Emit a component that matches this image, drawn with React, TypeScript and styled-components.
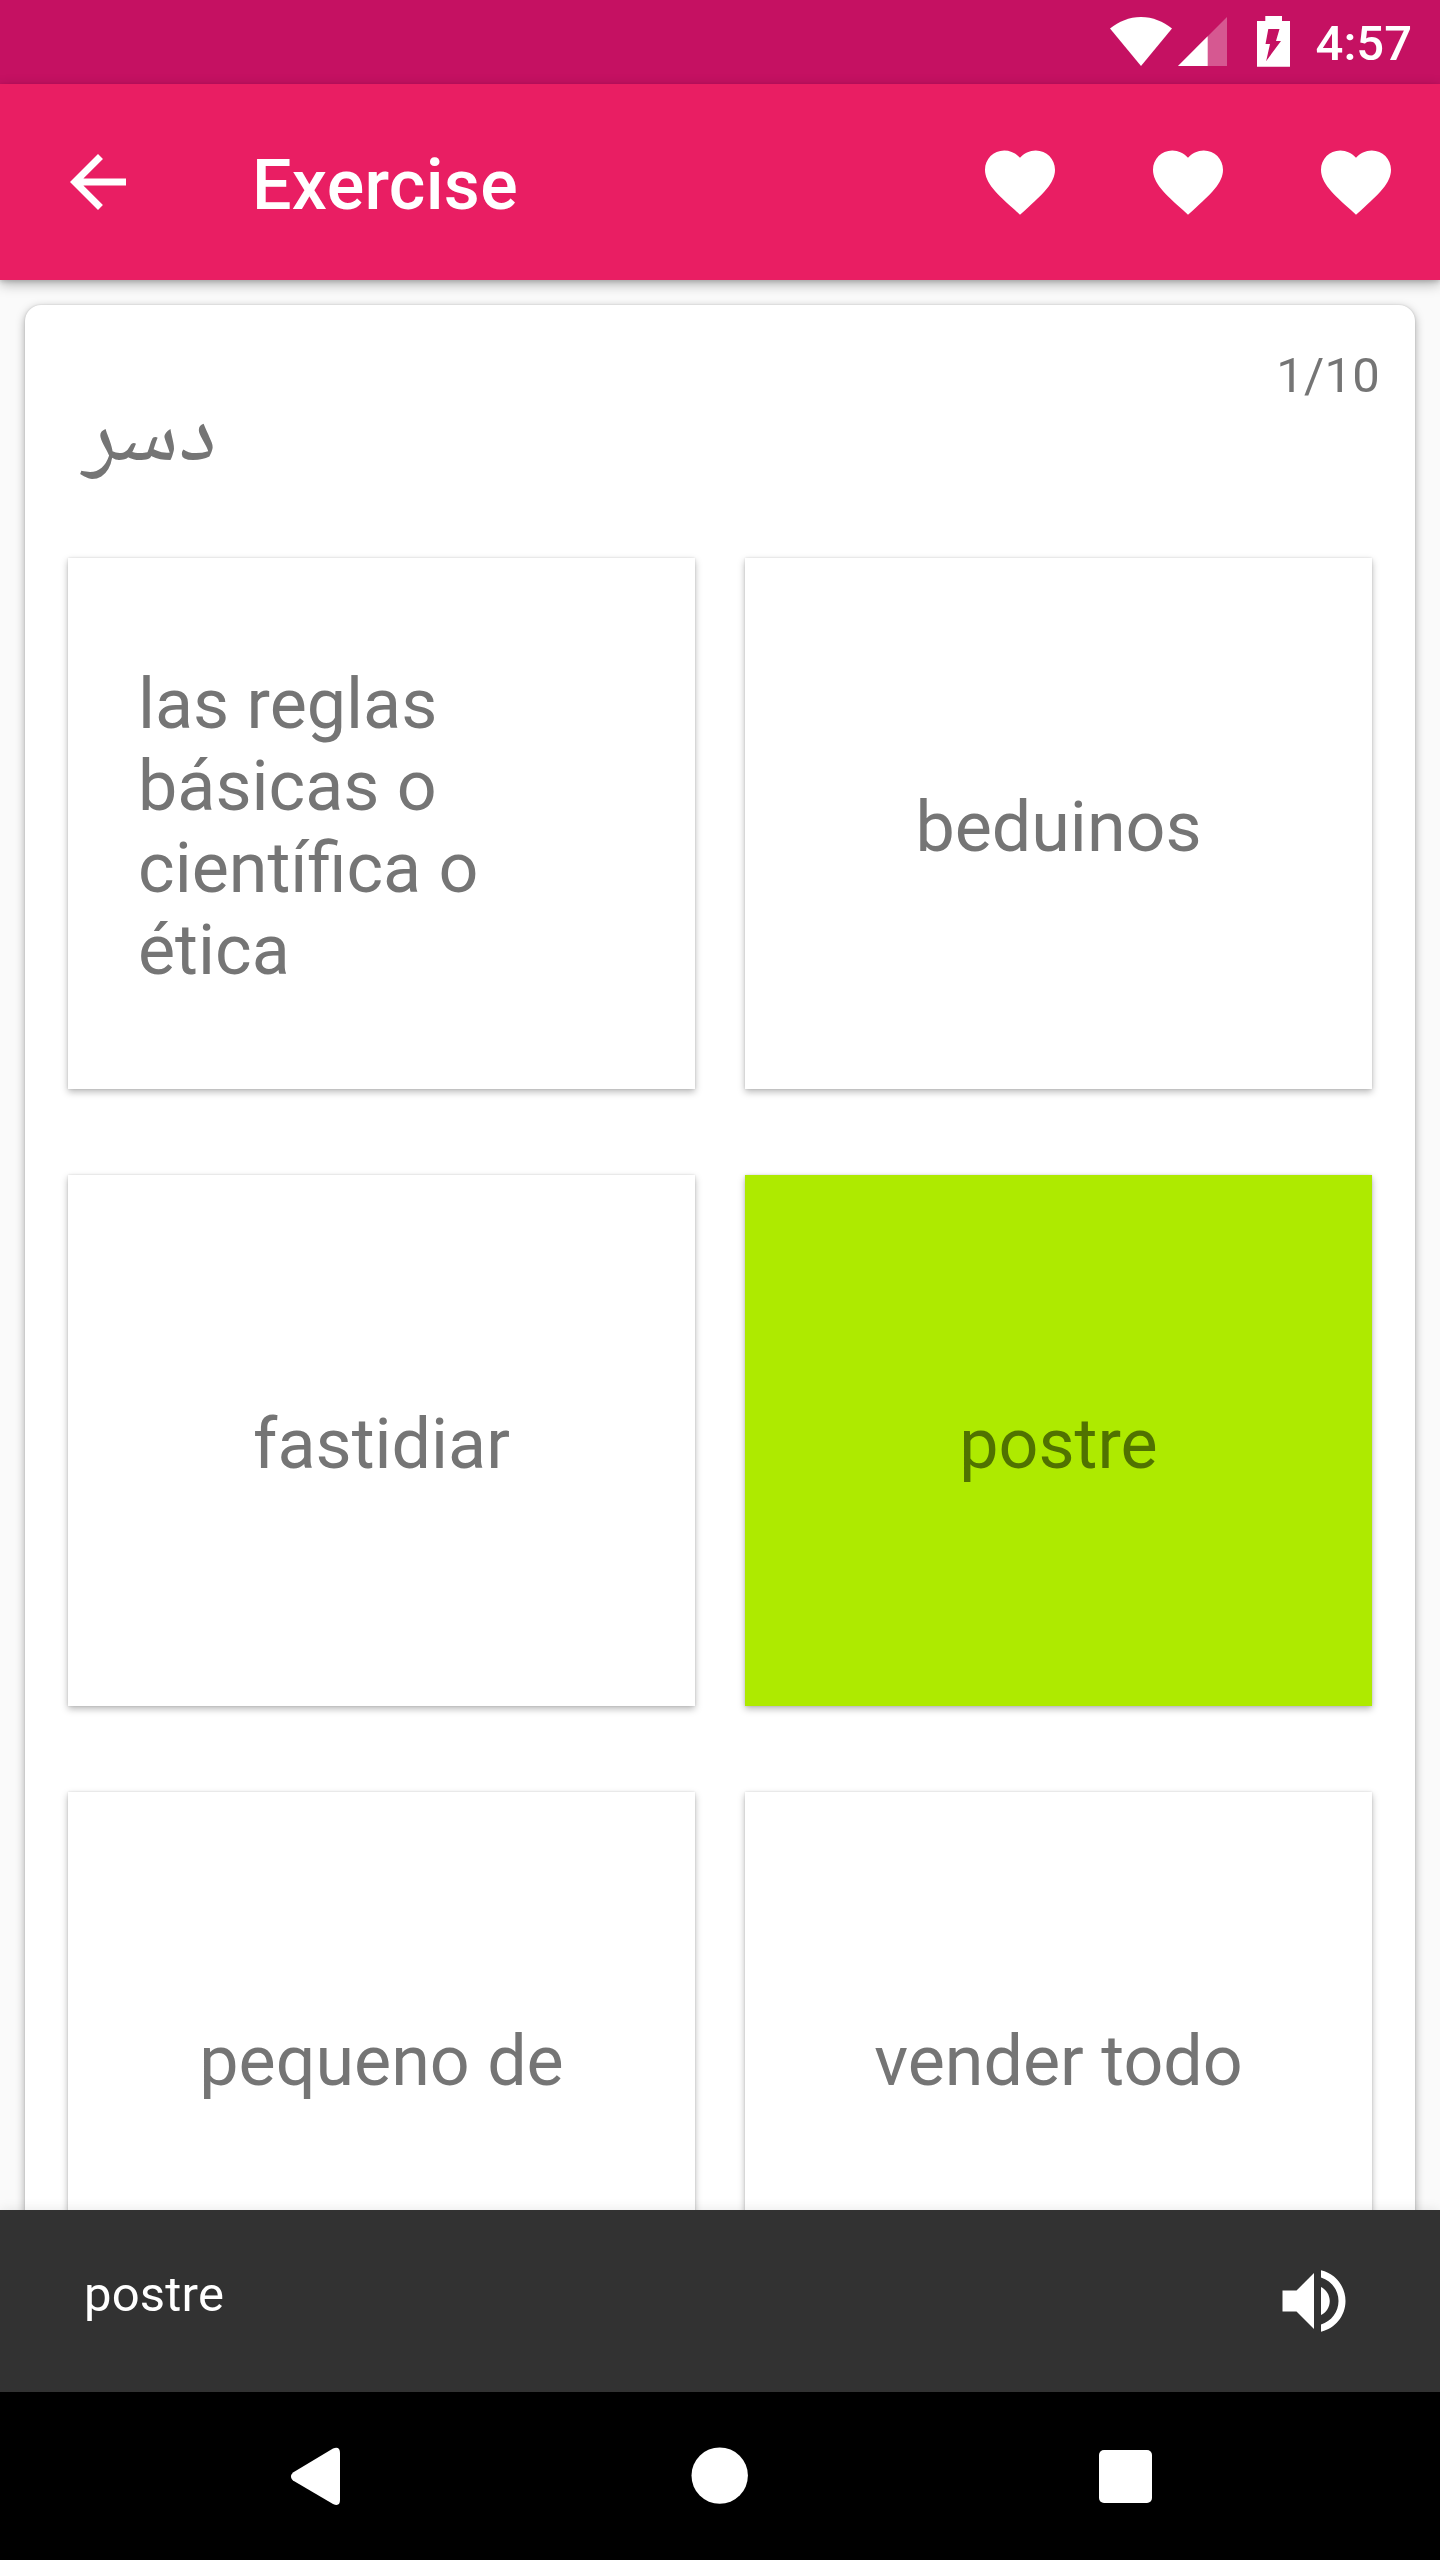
import React from "react";
import styled, { createGlobalStyle } from "styled-components";

const GlobalStyle = createGlobalStyle`
  *, *::before, *::after { box-sizing: border-box; }
  body {
    margin: 0;
    background: #fafafa;
    font-family: Roboto, "Noto Sans", sans-serif;
  }
`;

const Screen = styled.div`
  width: 1440px;
  height: 2560px;
  display: flex;
  flex-direction: column;
  overflow: hidden;
  background: #fafafa;
`;

const StatusBar = styled.header`
  flex: none;
  height: 84px;
  display: flex;
  align-items: flex-start;
  justify-content: flex-end;
  padding-right: 28px;
  background: #c51162;
  color: #fff;
`;

const StatusIcons = styled.svg`
  display: block;
  width: 190px;
  height: 84px;
  margin-right: 16px;
`;

const Clock = styled.span`
  font-size: 49px;
  line-height: 58px;
  font-weight: 500;
  padding-top: 15px;
`;

const Toolbar = styled.nav`
  flex: none;
  z-index: 2;
  height: 196px;
  display: flex;
  align-items: center;
  padding: 0 42px 0 56px;
  background: #e91e63;
  color: #fff;
  box-shadow: 0 4px 12px rgba(0, 0, 0, 0.3), 0 2px 4px rgba(0, 0, 0, 0.12);
`;

const Title = styled.h1`
  flex: 1;
  margin: 0;
  padding: 5px 0 0 112px;
  font-size: 70px;
  line-height: 82px;
  font-weight: 500;
  letter-spacing: 0.3px;
`;

const Icon = styled.svg`
  display: block;
  flex: none;
  width: 84px;
  height: 84px;
  fill: currentColor;
`;

const Lives = styled.div`
  display: flex;
  gap: 84px;
`;

const Content = styled.main`
  flex: 1;
  min-height: 0;
  overflow: hidden;
  padding: 25px 25px 0;
`;

const Card = styled.section`
  height: 2400px;
  padding: 42px 43px 0;
  border-radius: 16px;
  background: #fff;
  color: #757575;
  box-shadow: 0 3px 10px rgba(0, 0, 0, 0.34), 0 0 2px rgba(0, 0, 0, 0.14);
`;

const CardHead = styled.div`
  height: 211px;
  display: flex;
  flex-direction: column;
`;

const Progress = styled.div`
  align-self: flex-end;
  margin-right: -8px;
  font-size: 49px;
  line-height: 58px;
  letter-spacing: 0.2px;
`;

const Word = styled.div`
  align-self: flex-start;
  margin: -5px 0 0 14px;
  font-family: "Noto Naskh Arabic", "DejaVu Sans", sans-serif;
  font-size: 91px;
  line-height: 82px;
`;

const Tiles = styled.div`
  display: grid;
  grid-template-columns: 1fr 1fr;
  grid-auto-rows: 531px;
  gap: 86px 50px;
`;

const Tile = styled.button<{ $correct?: boolean }>`
  display: flex;
  align-items: center;
  justify-content: center;
  margin: 0;
  padding: 7px 70px 0;
  border: 0;
  background: ${(p) => (p.$correct ? "#aeea00" : "#fff")};
  color: ${(p) => (p.$correct ? "#507200" : "#757575")};
  font: 400 70px/82px Roboto, "Noto Sans", sans-serif;
  text-align: left;
  box-shadow: 0 3px 7px rgba(0, 0, 0, 0.28), 0 0 2px rgba(0, 0, 0, 0.12);
`;

const Snackbar = styled.footer`
  flex: none;
  z-index: 1;
  height: 182px;
  display: flex;
  align-items: center;
  justify-content: space-between;
  padding: 0 84px;
  background: #323232;
  color: #fff;
  box-shadow: 0 0 12px rgba(0, 0, 0, 0.1);
`;

const SnackText = styled.span`
  font-size: 49px;
  line-height: 58px;
  letter-spacing: 0.2px;
  padding-bottom: 12px;
`;

const NavBar = styled.div`
  flex: none;
  height: 168px;
  background: #000;
`;

const NavIcons = styled.svg`
  display: block;
  fill: #fff;
`;

const HEART =
  "M12 21.35l-1.45-1.32C5.4 15.36 2 12.28 2 8.5 2 5.42 4.42 3 7.5 3c1.74 0 3.41.81 4.5 2.09C13.09 3.81 14.76 3 16.5 3 19.58 3 22 5.42 22 8.5c0 3.78-3.4 6.86-8.55 11.54L12 21.35z";
const BACK = "M20 11H7.83l5.59-5.59L12 4l-8 8 8 8 1.41-1.41L7.83 13H20v-2z";
const VOLUME =
  "M3 9v6h4l5 5V4L7 9H3zm13.5 3c0-1.77-1.02-3.29-2.5-4.03v8.05c1.48-.73 2.5-2.25 2.5-4.02zM14 3.23v2.06c2.89.86 5 3.54 5 6.71s-2.11 5.85-5 6.71v2.06c4.01-.91 7-4.49 7-8.77s-2.99-7.86-7-8.77z";

const answers = [
  { text: "las reglas básicas o científica o ética" },
  { text: "beduinos" },
  { text: "fastidiar" },
  { text: "postre", correct: true },
  { text: "pequeno de" },
  { text: "vender todo" },
];

function MaterialIcon({ path }: { path: string }) {
  return (
    <Icon viewBox="0 0 24 24">
      <path d={path} />
    </Icon>
  );
}

export default function App() {
  return (
    <Screen>
      <GlobalStyle />
      <StatusBar>
        <StatusIcons viewBox="1110 0 190 84" fill="#fff">
          <path d="M1110 28.5C1119 21.500 1129 17 1141 17S1163 21.500 1172 28.500L1141 66Z" />
          <path d="M1178 66L1227 17V66Z" opacity="0.3" />
          <path d="M1178 66L1207.700 36.300V66Z" />
          <path
            fillRule="evenodd"
            d="M1265.300 16H1282V21H1290V66.700H1257V21H1265.300ZM1268.300 29L1265.500 44H1270L1266.200 61L1281 41H1276L1279.500 29Z"
          />
        </StatusIcons>
        <Clock>4:57</Clock>
      </StatusBar>
      <Toolbar>
        <MaterialIcon path={BACK} />
        <Title>Exercise</Title>
        <Lives>
          {[0, 1, 2].map((life) => (
            <MaterialIcon key={life} path={HEART} />
          ))}
        </Lives>
      </Toolbar>
      <Content>
        <Card>
          <CardHead>
            <Progress>1/10</Progress>
            <Word lang="ar" dir="rtl">دسر</Word>
          </CardHead>
          <Tiles>
            {answers.map((answer) => (
              <Tile key={answer.text} $correct={answer.correct}>
                <span>{answer.text}</span>
              </Tile>
            ))}
          </Tiles>
        </Card>
      </Content>
      <Snackbar>
        <SnackText>postre</SnackText>
        <MaterialIcon path={VOLUME} />
      </Snackbar>
      <NavBar>
        <NavIcons width="1440" height="168" viewBox="0 0 1440 168">
          <path d="M293 80.500L333 56.500Q340 54 340 61V108Q340 115 333 112L293 88.500Q289 84.500 293 80.500Z" />
          <circle cx="719.700" cy="83.600" r="28.200" />
          <rect x="1099" y="58" width="53" height="53" rx="5" />
        </NavIcons>
      </NavBar>
    </Screen>
  );
}
